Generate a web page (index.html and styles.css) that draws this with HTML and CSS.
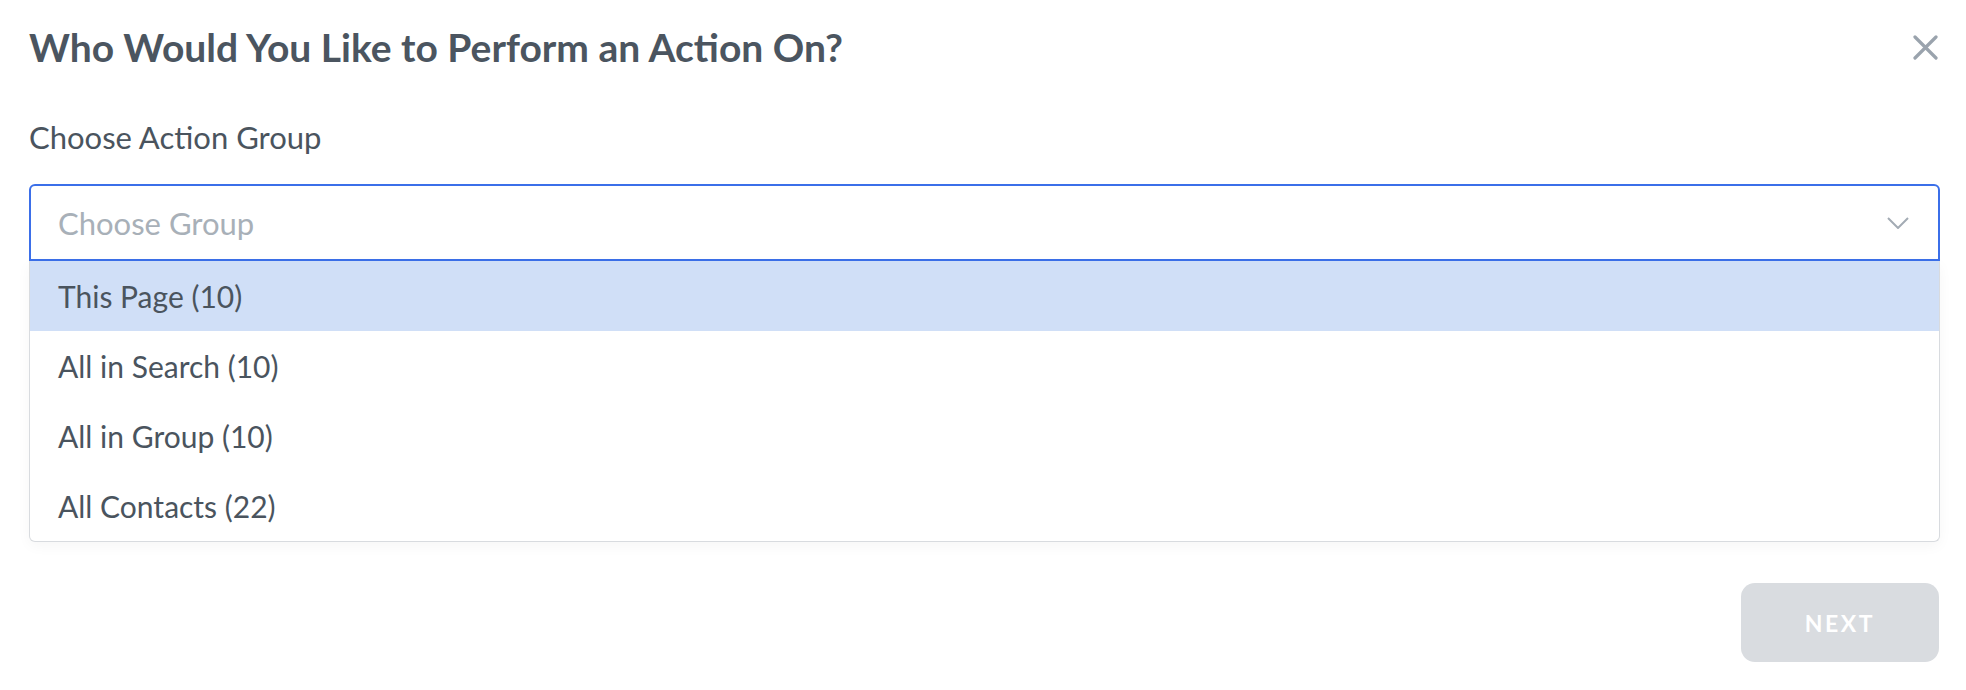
FILE: index.html
```html
<!DOCTYPE html>
<html lang="en">
<head>
<meta charset="utf-8">
<title>Choose Action Group</title>
<link rel="stylesheet" href="styles.css">
</head>
<body>
<div class="modal">
  <header class="modal-header">
    <h1 class="modal-title">Who Would You Like to Perform an Action On?</h1>
    <button class="close-btn" aria-label="Close">
      <svg width="25" height="25" viewBox="0 0 25 25"><path d="M2 2 L23 23 M23 2 L2 23" stroke="#9aa3ad" stroke-width="3.2" stroke-linecap="round" fill="none"/></svg>
    </button>
  </header>
  <div class="modal-body">
    <label class="field-label">Choose Action Group</label>
    <div class="select-wrap">
      <div class="select">
        <span class="placeholder">Choose Group</span>
        <svg class="chevron" width="22" height="12" viewBox="0 0 22 12"><path d="M1 1 L11 11 L21 1" stroke="#a3abb4" stroke-width="2" fill="none"/></svg>
      </div>
      <ul class="menu">
        <li class="option active">This Page (10)</li>
        <li class="option">All in Search (10)</li>
        <li class="option">All in Group (10)</li>
        <li class="option">All Contacts (22)</li>
      </ul>
    </div>
  </div>
  <footer class="modal-footer">
    <button class="next-btn">NEXT</button>
  </footer>
</div>
</body>
</html>
```
FILE: styles.css
```css
html, body {
  margin: 0;
  padding: 0;
  background: #ffffff;
}
body {
  font-family: "Lato", "Liberation Sans", sans-serif;
  color: #4a545e;
}
.modal {
  padding: 0 26px 0 29px;
}
.modal-header {
  height: 94px;
  display: flex;
  align-items: center;
  justify-content: space-between;
}
.modal-title {
  margin: 0;
  font-size: 39px;
  line-height: 44px;
  font-weight: 700;
  color: #4b5560;
}
.close-btn {
  background: none;
  border: 0;
  padding: 0;
  width: 25px;
  height: 25px;
  display: flex;
  margin-right: 2px;
}
.modal-body {
  padding-top: 26px;
}
.field-label {
  display: block;
  font-size: 31px;
  line-height: 34px;
  color: #4a545e;
}
.select-wrap {
  position: relative;
  margin-top: 30px;
}
.select {
  height: 77px;
  box-sizing: border-box;
  border: 2px solid #3b6fe9;
  border-radius: 6px 6px 0 0;
  padding: 0 29px 0 27px;
  display: flex;
  align-items: center;
  justify-content: space-between;
}
.placeholder {
  font-size: 31px;
  color: #a8b0b8;
}
.menu {
  position: absolute;
  top: 100%;
  left: 0;
  right: 0;
  margin: 0;
  padding: 0;
  list-style: none;
  background: #fff;
  border: 1px solid #d8dbdf;
  border-top: 0;
  border-radius: 0 0 6px 6px;
  box-shadow: 0 4px 14px rgba(0, 0, 0, 0.04);
}
.option {
  height: 70px;
  display: flex;
  align-items: center;
  padding-left: 28px;
  font-size: 30px;
  color: #4a545e;
}
.option.active {
  background: #d0dff7;
}
.modal-footer {
  display: flex;
  justify-content: flex-end;
  margin-top: 322px;
}
.next-btn {
  width: 198px;
  height: 79px;
  border: 0;
  border-radius: 14px;
  background: #d9dce0;
  color: #ffffff;
  font-family: "Lato", "Liberation Sans", sans-serif;
  font-weight: 700;
  font-size: 23px;
  letter-spacing: 2.6px;
  margin-right: 1px;
}
```
